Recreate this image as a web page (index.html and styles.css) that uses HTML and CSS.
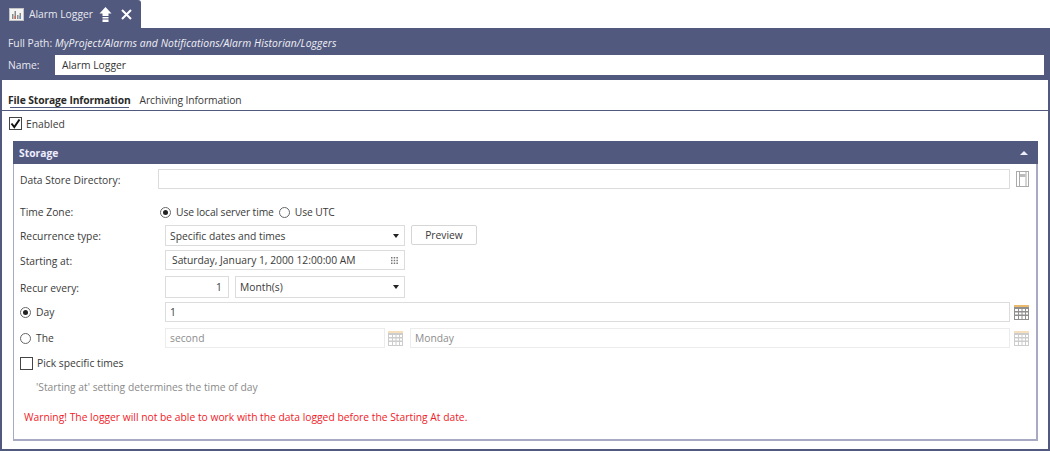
FILE: index.html
```html
<!DOCTYPE html>
<html lang="en">
<head>
<meta charset="utf-8">
<title>Alarm Logger</title>
<link rel="stylesheet" href="styles.css">
</head>
<body>
<div class="tabstrip">
  <div class="doctab">
    <svg class="tab-icon" width="15" height="13" viewBox="0 0 15 13"><rect x=".5" y=".5" width="14" height="12" fill="#f4f4f4" stroke="#c4c4c4"/><path d="M3 11V6h1.500v5zM5.500 11V3H7v8zM8 11V7h1.500v4zM10.500 11V5H12v6z" fill="#8a8a8a"/><path d="M5.500 11V8H7v3z" fill="#c46a5a"/><path d="M10.500 11V8H12v3z" fill="#6a8fc4"/></svg>
    <span class="tab-title">Alarm Logger</span>
    <svg class="tab-pin" width="13" height="15" viewBox="0 0 13 15"><path d="M6.500 0 12.500 6.500H9.500V9H3.500V6.500H.5zM3.500 10h6v1.500h-6zM3.500 12.500h6V15h-6z" fill="#fff"/></svg>
    <svg class="tab-close" width="11" height="11" viewBox="0 0 11 11"><path d="M1 1l9 9M10 1l-9 9" stroke="#fff" stroke-width="2"/></svg>
  </div>
</div>
<main class="frame">
  <header class="head">
    <div class="path-row"><span class="head-label">Full Path:</span><em class="path">MyProject/Alarms and Notifications/Alarm Historian/Loggers</em></div>
    <div class="name-row"><span class="head-label name-label">Name:</span><div class="field name-field">Alarm Logger</div></div>
  </header>
  <nav class="tabs">
    <span class="tab active">File Storage Information</span>
    <span class="tab">Archiving Information</span>
  </nav>
  <div class="content">
    <div class="enabled-row">
      <svg class="check" width="13" height="13" viewBox="0 0 13 13"><rect x=".5" y=".5" width="12" height="12" fill="#fff" stroke="#444"/><path d="M2.500 6.500 5.300 10 10.500 2.500" fill="none" stroke="#111" stroke-width="2"/></svg>
      <span>Enabled</span>
    </div>
    <section class="panel">
      <div class="panel-head"><span>Storage</span><span class="caret"></span></div>
      <div class="panel-body">
        <div class="row row-dir">
          <label class="lab lab-dir">Data Store Directory:</label>
          <div class="field grow"></div>
          <svg class="book" width="13" height="16" viewBox="0 0 13 16"><rect x=".5" y=".5" width="12" height="15" fill="#fff" stroke="#aaa"/><path d="M3.500 1v14M10 1v14" stroke="#aaa" fill="none"/><rect x="4" y="3" width="5.500" height="3" fill="#bbb"/></svg>
        </div>
        <div class="row row-tz">
          <label class="lab lab-dir">Time Zone:</label>
          <span class="radio on tz-first"></span><span class="radio-text">Use local server time</span>
          <span class="radio"></span><span class="radio-text">Use UTC</span>
        </div>
        <div class="row row-rec">
          <label class="lab">Recurrence type:</label>
          <div class="field select w240"><span>Specific dates and times</span><i class="arrow"></i></div>
          <div class="button">Preview</div>
        </div>
        <div class="row row-start">
          <label class="lab">Starting at:</label>
          <div class="field select w240 date"><span>Saturday, January 1, 2000 12:00:00 AM</span>
            <svg width="7" height="7" viewBox="0 0 7 7"><path d="M0 0h1.500v1.500H0zM2.700 0h1.500v1.500H2.700zM5.400 0h1.500v1.500H5.400zM0 2.700h1.500v1.500H0zM2.700 2.700h1.500v1.500H2.700zM5.400 2.700h1.500v1.500H5.400zM0 5.400h1.500v1.500H0zM2.700 5.400h1.500v1.500H2.700zM5.400 5.400h1.500v1.500H5.400z" fill="#777"/></svg>
          </div>
        </div>
        <div class="row row-every">
          <label class="lab">Recur every:</label>
          <div class="field number">1</div>
          <div class="field select month"><span>Month(s)</span><i class="arrow"></i></div>
        </div>
        <div class="row row-day">
          <label class="lab radio-lab"><span class="radio on"></span><span>Day</span></label>
          <div class="field grow">1</div>
          <svg class="cal" width="15" height="15" viewBox="0 0 15 15"><rect width="15" height="2" fill="#e9b96e"/><rect y="2" width="15" height="13" fill="#8f8f8f"/><path d="M1 4h3v2H1zM5 4h2.500v2H5zM8.500 4H11v2H8.500zM12 4h2v2h-2zM1 7.500h3v2H1zM5 7.500h2.500v2H5zM8.500 7.500H11v2H8.500zM12 7.500h2v2h-2zM1 11h3v3H1zM5 11h2.500v3H5zM8.500 11H11v3H8.500zM12 11h2v3h-2z" fill="#fff"/></svg>
        </div>
        <div class="row row-the">
          <label class="lab radio-lab"><span class="radio"></span><span>The</span></label>
          <div class="field off w220">second</div>
          <svg class="cal cal-off cal-mid" width="15" height="15" viewBox="0 0 15 15"><rect width="15" height="2" fill="#e9b96e"/><rect y="2" width="15" height="13" fill="#8f8f8f"/><path d="M1 4h3v2H1zM5 4h2.500v2H5zM8.500 4H11v2H8.500zM12 4h2v2h-2zM1 7.500h3v2H1zM5 7.500h2.500v2H5zM8.500 7.500H11v2H8.500zM12 7.500h2v2h-2zM1 11h3v3H1zM5 11h2.500v3H5zM8.500 11H11v3H8.500zM12 11h2v3h-2z" fill="#fff"/></svg>
          <div class="field off grow">Monday</div>
          <svg class="cal cal-off" width="15" height="15" viewBox="0 0 15 15"><rect width="15" height="2" fill="#e9b96e"/><rect y="2" width="15" height="13" fill="#8f8f8f"/><path d="M1 4h3v2H1zM5 4h2.500v2H5zM8.500 4H11v2H8.500zM12 4h2v2h-2zM1 7.500h3v2H1zM5 7.500h2.500v2H5zM8.500 7.500H11v2H8.500zM12 7.500h2v2h-2zM1 11h3v3H1zM5 11h2.500v3H5zM8.500 11H11v3H8.500zM12 11h2v3h-2z" fill="#fff"/></svg>
        </div>
        <div class="pick-row"><span class="box"></span><span>Pick specific times</span></div>
        <p class="note">'Starting at' setting determines the time of day</p>
        <p class="warning">Warning! The logger will not be able to work with the data logged before the Starting At date.</p>
      </div>
    </section>
  </div>
</main>
</body>
</html>
```

FILE: styles.css
```css
* { box-sizing: border-box; }
html, body { margin: 0; height: 100%; }
body {
  width: 1050px;
  height: 451px;
  overflow: hidden;
  background: #fff;
  color: #3a3a3a;
  font-family: "Open Sans", "Noto Sans", sans-serif;
  font-size: 10.3px;
  line-height: 14px;
}
.tabstrip { height: 28px; display: flex; }
.doctab {
  width: 141px;
  height: 28px;
  background: #52597f;
  border-radius: 0 3px 0 0;
  color: #e8e9ef;
  display: flex;
  align-items: center;
  padding: 0 0 0 9px;
}
.tab-title { margin-left: 5px; }
.tab-pin { margin-left: 6px; }
.tab-close { margin-left: 9px; }
.frame {
  height: 423px;
  width: 1050px;
  border: solid #52597f;
  border-width: 0 2px 2px 2px;
  display: flex;
  flex-direction: column;
}
.head {
  height: 52px;
  background: #52597f;
  color: #e8e9ef;
  margin: 0 -2px;
  padding: 8px 6px 0 8px;
}
.path-row { display: flex; height: 15px; }
.head-label { width: 47px; flex: none; }
.path { font-style: italic; color: #f0f0f5; letter-spacing: .12px; }
.name-row { display: flex; align-items: center; margin-top: 4px; }
.field {
  height: 20px;
  border: 1px solid #dcdcdc;
  background: #fff;
  padding: 2px 4px;
  color: #3a3a3a;
}
.name-field { flex: 1; border: 0; padding: 3px 7px; color: #333; }
.tabs {
  height: 31px;
  border-bottom: 1px solid #52597f;
  display: flex;
  padding: 13px 0 0 6px;
  gap: 9px;
}
.tab { color: #3a3a3a; letter-spacing: -.1px; }
.tab.active {
  font-weight: 700;
  color: #2a2a2a;
  height: 15px;
  position: relative;
}
.tab.active::after {
  content: "";
  position: absolute;
  left: 2px; right: 2px; top: 14px;
  height: 1px;
  background: #52597f;
}
.content { flex: 1; padding: 0 10px 8px 11px; display: flex; flex-direction: column; }
.enabled-row { display: flex; align-items: center; gap: 4px; height: 30px; padding: 0 0 5px 0; margin-left: -4px; }
.panel { flex: 1; border: 1px solid #a8aac4; border-width: 0 2px 2px 1px; display: flex; flex-direction: column; }
.panel-head {
  height: 23px;
  margin: 0 -2px 0 -1px;
  background: #52597f;
  color: #eef;
  font-weight: 700;
  padding: 0 8px 0 6px;
  display: flex;
  align-items: center;
  justify-content: space-between;
}
.caret { border: 4px solid transparent; border-top: 0; border-bottom: 4px solid #eef; margin-right: 2px; }
.panel-body { padding: 5px 0 0 6px; flex: 1; }
.row { display: flex; align-items: center; }
.lab { width: 145px; flex: none; }
.lab-dir { width: 138px; }
.grow { flex: 1; min-width: 0; }
.row-dir { height: 20px; padding-right: 7px; }
.row-dir .lab { padding-top: 1px; }
.row-dir .book { margin-left: 6px; }
.row-tz { height: 14px; margin-top: 16px; }
.tz-first { margin-left: 2px; }
.radio-text { margin: 0 5px; letter-spacing: -.1px; }
.radio {
  display: inline-block;
  width: 11px; height: 11px;
  border: 1px solid #666;
  border-radius: 50%;
  background: #fff;
  flex: none;
  position: relative;
}
.radio.on::after {
  content: "";
  position: absolute;
  left: 2px; top: 2px;
  width: 5px; height: 5px;
  border-radius: 50%;
  background: #222;
}
.row-tz .radio-text:first-of-type { margin-left: 4px; }
.row-rec { margin-top: 6px; height: 21px; align-items: flex-start; }
.row-rec .lab { padding-top: 4px; }
.row-start { margin-top: 4px; height: 20px; }
.row-start .lab, .row-every .lab { padding-top: 2px; }
.row-every { margin-top: 6px; height: 22px; }
.row-day { margin-top: 4px; height: 20px; padding-right: 7px; }
.row-the { margin-top: 6px; height: 20px; padding-right: 7px; }
.select { display: flex; align-items: center; justify-content: space-between; }
.w240 { width: 240px; height: 21px; }
.row-start .w240 { height: 20px; }
.date { padding-left: 6px; padding-right: 6px; }
.arrow { border: 3px solid transparent; border-bottom: 0; border-top: 4px solid #222; margin-right: 1px; }
.button {
  width: 66px; height: 20px;
  margin-left: 6px;
  border: 1px solid #d5d5d5;
  border-radius: 2px;
  text-align: center;
  padding-top: 2px;
}
.number { width: 64px; height: 22px; text-align: right; padding-top: 3px; padding-right: 6px; }
.month { width: 170px; height: 22px; margin-left: 6px; }
.row-day .cal { margin-left: 4px; }
.radio-lab { display: flex; align-items: center; gap: 5px; }
.w220 { width: 220px; }
.off { color: #8d8d8d; border-color: #ececec; }
.cal-off { opacity: .45; margin-left: 4px; }
.cal-mid { margin-left: 3px; margin-right: 7px; }
.pick-row { display: flex; align-items: center; gap: 4px; margin-top: 8px; height: 14px; }
.box { width: 13px; height: 13px; border: 1px solid #444; background: #fff; flex: none; }
.note { margin: 10px 0 0 16px; color: #8a8a8a; }
.warning { margin: 16px 0 0 4px; color: #f01a28; }
```
